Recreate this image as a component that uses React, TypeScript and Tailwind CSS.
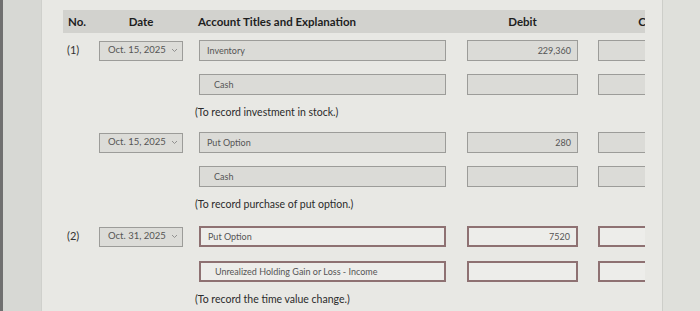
import React from "react";

const font = { fontFamily: "Lato, 'Open Sans', sans-serif" };

function DateSelect({ value }: { value: string }) {
  return (
    <div className="w-[84px] h-[20px] bg-[#dcdcd8] border border-[#9c9c99] flex items-center pl-[8px] pr-[4px] text-[9.5px] text-[#555] shrink-0">
      <span className="flex-1">{value}</span>
      <svg width="7" height="5" viewBox="0 0 7 5" className="shrink-0">
        <path d="M1 1 L3.5 3.5 L6 1" fill="none" stroke="#888" strokeWidth="0.9" />
      </svg>
    </div>
  );
}

function Box({
  w,
  text,
  right,
  red,
  indent,
}: {
  w: string;
  text?: string;
  right?: boolean;
  red?: boolean;
  indent?: boolean;
}) {
  const base = red
    ? "bg-[#ededea] border-2 border-[#8e7172]"
    : "bg-[#dbdbd7] border border-[#9c9c99]";
  return (
    <div
      className={`${w} h-[21px] ${base} flex items-center text-[9px] text-[#555] shrink-0 ${
        right ? "justify-end pr-[6px]" : indent ? "pl-[14px]" : "pl-[7px]"
      }`}
    >
      {text}
    </div>
  );
}

function Row({
  no,
  date,
  account,
  debit,
  red,
  indent,
}: {
  no?: string;
  date?: string;
  account: string;
  debit?: string;
  red?: boolean;
  indent?: boolean;
}) {
  return (
    <div className="flex items-center h-[21px]">
      <div className="w-[36px] pl-[4px] text-[11px] text-[#333] shrink-0">{no}</div>
      <div className="w-[100px] shrink-0">{date && <DateSelect value={date} />}</div>
      <Box w="w-[247px]" text={account} red={red} indent={indent} />
      <div className="w-[21px] shrink-0" />
      <Box w="w-[111px]" text={debit} right red={red} />
      <div className="w-[20px] shrink-0" />
      <Box w="w-[60px]" red={red} />
    </div>
  );
}

function Expl({ text }: { text: string }) {
  return (
    <div className="h-[20px] flex items-center pl-[132px] text-[10.5px] text-[#2b2b2b] mt-[8px]">
      {text}
    </div>
  );
}

export default function App() {
  return (
    <div className="w-[700px] h-[311px] flex bg-[#e8e8e4] overflow-hidden" style={font}>
      <div className="w-[42px] h-full bg-[#d7d8d4] border-l-[3px] border-[#707070] border-r border-r-[#cfd0cc] shrink-0" />
      <div className="w-[620px] h-full pl-[21px] pt-[10px] shrink-0">
        <div className="w-[582px] overflow-hidden">
          <div className="w-[680px]">
            <div className="h-[23px] bg-[#d2d2ce] flex items-center text-[11.5px] font-bold text-[#1e1e1e]">
              <div className="w-[36px] pl-[5px] shrink-0">No.</div>
              <div className="w-[84px] text-center shrink-0">Date</div>
              <div className="w-[15px] shrink-0" />
              <div className="w-[269px] shrink-0">Account Titles and Explanation</div>
              <div className="w-[111px] text-center shrink-0">Debit</div>
              <div className="w-[20px] shrink-0" />
              <div className="w-[112px] text-center shrink-0">Credit</div>
            </div>

            <div className="mt-[7px]">
              <Row no="(1)" date="Oct. 15, 2025" account="Inventory" debit="229,360" />
              <div className="mt-[13px]">
                <Row account="Cash" indent />
              </div>
              <Expl text="(To record investment in stock.)" />
            </div>

            <div className="mt-[9px]">
              <Row date="Oct. 15, 2025" account="Put Option" debit="280" />
              <div className="mt-[13px]">
                <Row account="Cash" indent />
              </div>
              <Expl text="(To record purchase of put option.)" />
            </div>

            <div className="mt-[11px]">
              <Row no="(2)" date="Oct. 31, 2025" account="Put Option" debit="7520" red />
              <div className="mt-[14px]">
                <Row account="Unrealized Holding Gain or Loss - Income" indent red />
              </div>
              <Expl text="(To record the time value change.)" />
            </div>
          </div>
        </div>
      </div>
      <div className="flex-1 h-full bg-[#dfe0db] border-l border-[#cdcec9]" />
    </div>
  );
}
